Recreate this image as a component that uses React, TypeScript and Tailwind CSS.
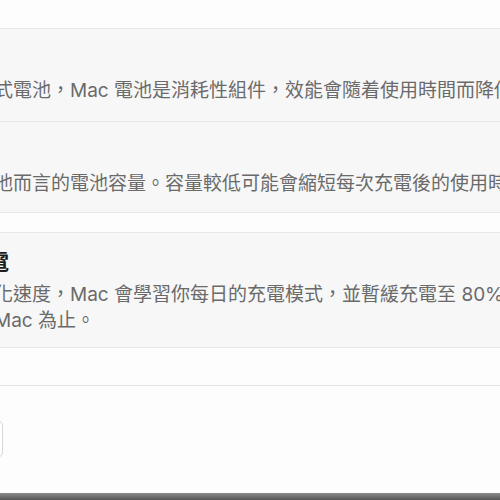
const FONT = 'font-["Inter","Noto_Sans_CJK_TC",sans-serif]';

const Line = ({ children }: { children: React.ReactNode }) => (
  <div className="h-[26px] leading-[26px] whitespace-nowrap text-[19px] text-[#6a6a6a] ml-[-6px]">
    {children}
  </div>
);

export default function App() {
  return (
    <div className={`w-[500px] h-[500px] overflow-hidden bg-[#fdfdfd] flex flex-col ${FONT}`}>
      {/* top gap */}
      <div className="h-[28px] shrink-0" />

      {/* battery health + capacity rows */}
      <div className="shrink-0 border-y border-[#e8e8e8] bg-[#f7f7f7] mx-[-10px] px-[10px]">
        <div className="pt-[49px] pb-[17px]">
          <Line>式電池，Mac 電池是消耗性組件，效能會隨着使用時間而降低。</Line>
        </div>
        <div className="h-px bg-[#e6e6e6] mx-[-10px]" />
        <div className="pt-[49px] pb-[15px]">
          <Line>池而言的電池容量。容量較低可能會縮短每次充電後的使用時間。</Line>
        </div>
      </div>

      {/* optimized charging */}
      <div className="shrink-0 mt-[19px] border-y border-[#e8e8e8] bg-[#f7f7f7] mx-[-10px] px-[10px] pt-[16px] pb-[13px]">
        <div className="h-[26px] leading-[26px] whitespace-nowrap text-[21px] font-bold text-[#1c1c1c] ml-[-12px]">
          電
        </div>
        <div className="mt-[7px]">
          <Line>化速度，Mac 會學習你每日的充電模式，並暫緩充電至 80% 以上，直到你需要使用</Line>
          <Line>Mac 為止。</Line>
        </div>
      </div>

      <div className="h-[37px] shrink-0" />
      <div className="h-px shrink-0 bg-[#e4e4e4]" />

      <div className="flex-1 flex flex-col">
        <div className="mt-[34px] ml-[-60px] w-[63px] h-[38px] rounded-md border border-[#d6d6d6] bg-white" />
      </div>

      {/* window bottom edge */}
      <div className="h-[7px] shrink-0 bg-gradient-to-b from-[#8c8c8c] to-[#555555]" />
    </div>
  );
}
